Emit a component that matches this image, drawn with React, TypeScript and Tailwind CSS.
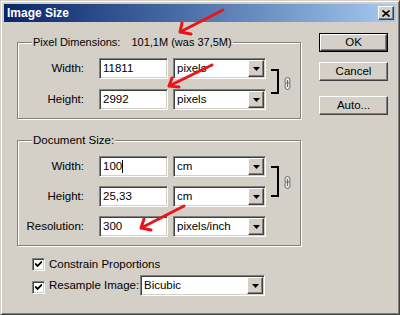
import React from 'react';

// sunken / raised frames in the classic Windows look
const sunken =
  'border border-t-[#808080] border-l-[#808080] border-b-white border-r-white shadow-[inset_1px_1px_0_#404040,inset_-1px_-1px_0_#d4d0c8]';
const raised =
  'border border-t-white border-l-white border-b-[#404040] border-r-[#404040] shadow-[inset_-1px_-1px_0_#808080]';

function Field({ value, caret }: { value: string; caret?: boolean }) {
  return (
    <div className={`w-[69px] h-[21px] bg-white flex items-center pl-[3px] ${sunken}`}>
      <span>{value}</span>
      {caret && <span className="w-px h-[13px] bg-black" />}
    </div>
  );
}

function DropArrow() {
  return (
    <div className={`w-[16px] h-[17px] bg-[#d4d0c8] flex items-center justify-center ${raised}`}>
      <svg width="7" height="4" viewBox="0 0 7 4">
        <polygon points="0,0 7,0 3.5,4" fill="#000" />
      </svg>
    </div>
  );
}

function Select({ value, width = 'w-[93px]' }: { value: string; width?: string }) {
  return (
    <div className={`${width} shrink-0 h-[21px] bg-white flex items-center justify-between pl-[3px] pr-px ${sunken}`}>
      <span>{value}</span>
      <DropArrow />
    </div>
  );
}

function Chain() {
  return (
    <svg width="7" height="13" viewBox="0 0 7 13">
      <rect x="1" y="0.5" width="5" height="7" rx="2.5" fill="#e4e4e4" stroke="#6a6a6a" />
      <rect x="1" y="5.5" width="5" height="7" rx="2.5" fill="#e4e4e4" stroke="#6a6a6a" />
      <line x1="3.5" y1="3" x2="3.5" y2="10" stroke="#6a6a6a" />
    </svg>
  );
}

function Row({ label, value, unit, caret }: { label: string; value: string; unit: string; caret?: boolean }) {
  return (
    <div className="flex items-center h-[21px]">
      <span className="w-[66px] text-right">{label}</span>
      <div className="ml-[15px]">
        <Field value={value} caret={caret} />
      </div>
      <div className="ml-[5px]">
        <Select value={unit} />
      </div>
    </div>
  );
}

function Group({ title, children, height }: { title: React.ReactNode; children: React.ReactNode; height: string }) {
  return (
    <div className={`relative w-[284px] ${height} border border-[#808080] shadow-[inset_1px_1px_0_#fff,1px_1px_0_#fff]`}>
      <span className="absolute left-[14px] -top-[8px] px-px bg-[#d4d0c8] leading-[14px] whitespace-nowrap">{title}</span>
      {children}
    </div>
  );
}

function Checkbox() {
  return (
    <div className={`w-[13px] h-[13px] shrink-0 bg-white flex items-center justify-center ${sunken}`}>
      <svg width="7" height="7" viewBox="0 0 7 7">
        <path d="M0 2.5 L2.5 5 L7 0.5" fill="none" stroke="#000" strokeWidth="1.8" />
      </svg>
    </div>
  );
}

function Button({ label, isDefault }: { label: string; isDefault?: boolean }) {
  return (
    <div className={`w-[69px] h-[19px] ${isDefault ? 'border border-black' : ''}`}>
      <div className={`w-full h-full bg-[#d4d0c8] flex items-center justify-center ${raised}`}>{label}</div>
    </div>
  );
}

export default function App() {
  return (
    <div className="relative w-[400px] h-[315px] bg-[#d4d0c8] text-[11.5px] text-black font-['Liberation_Sans',Arial,sans-serif] border border-t-[#d4d0c8] border-l-[#d4d0c8] border-b-[#404040] border-r-[#404040] shadow-[inset_1px_1px_0_#fff,inset_-1px_-1px_0_#808080] p-[3px] flex flex-col">
      {/* title bar */}
      <div className="h-[18px] flex items-center justify-between bg-gradient-to-r from-[#0a246a] to-[#a6caf0] pl-[3px] pr-[2px]">
        <span className="text-white font-bold text-[12px]">Image Size</span>
        <div className={`w-[16px] h-[14px] bg-[#d4d0c8] flex items-center justify-center ${raised}`}>
          <svg width="8" height="7" viewBox="0 0 8 7">
            <path d="M0.5 0.5 L7.5 6.5 M7.5 0.5 L0.5 6.5" stroke="#000" strokeWidth="1.6" />
          </svg>
        </div>
      </div>

      <div className="flex pl-[13px]">
        <div className="flex flex-col pt-[20px]">
          <Group
            height="h-[77px]"
            title={
              <span className="text-[11px]">
                <span>Pixel Dimensions:</span>
                <span className="ml-[11px]">101,1M (was 37,5M)</span>
              </span>
            }
          >
            <div className="flex pt-[15px]">
              <div className="flex flex-col gap-[10px]">
                <Row label="Width:" value="11811" unit="pixels" />
                <Row label="Height:" value="2992" unit="pixels" />
              </div>
              <div className="ml-[5px] mt-[11px] w-[8px] h-[25px] border-t-2 border-r-2 border-b-2 border-black" />
              <div className="ml-[5px] mt-[19px]">
                <Chain />
              </div>
            </div>
          </Group>

          <div className="mt-[21px]">
            <Group height="h-[106px]" title="Document Size:">
              <div className="flex pt-[15px]">
                <div className="flex flex-col gap-[9px]">
                  <Row label="Width:" value="100" unit="cm" caret />
                  <Row label="Height:" value="25,33" unit="cm" />
                  <Row label="Resolution:" value="300" unit="pixels/inch" />
                </div>
                <div className="ml-[5px] mt-[10px] w-[8px] h-[31px] border-t-2 border-r-2 border-b-2 border-black" />
                <div className="ml-[5px] mt-[20px]">
                  <Chain />
                </div>
              </div>
            </Group>
          </div>

          <div className="flex flex-col pl-[15px] mt-[12px]">
            <div className="flex items-center h-[13px] gap-[4px]">
              <Checkbox />
              <span className="whitespace-nowrap">Constrain Proportions</span>
            </div>
            <div className="flex items-center h-[21px] mt-[4px] gap-[4px]">
              <div className="mt-[3px]">
                <Checkbox />
              </div>
              <span className="w-[87px] shrink-0 whitespace-nowrap">Resample Image:</span>
              <Select value="Bicubic" width="w-[125px]" />
            </div>
          </div>
        </div>

        <div className="flex flex-col ml-[18px] pt-[11px]">
          <Button label="OK" isDefault />
          <div className="mt-[10px]">
            <Button label="Cancel" />
          </div>
          <div className="mt-[15px]">
            <Button label="Auto..." />
          </div>
        </div>
      </div>

      {/* red annotation arrows drawn over the dialog */}
      <svg className="absolute left-0 top-0 pointer-events-none" width="400" height="315" viewBox="0 0 400 315">
        <g fill="none" stroke="#e8151b" strokeWidth="3" strokeLinecap="round" strokeLinejoin="round">
          <path d="M222 9 L179 31 M181 22 L179 31 L190 33" />
          <path d="M211 64 L168 85 M171 77 L168 85 L178 86" />
          <path d="M183 205 L140 227 M143 218 L140 227 L150 229" />
        </g>
      </svg>
    </div>
  );
}
